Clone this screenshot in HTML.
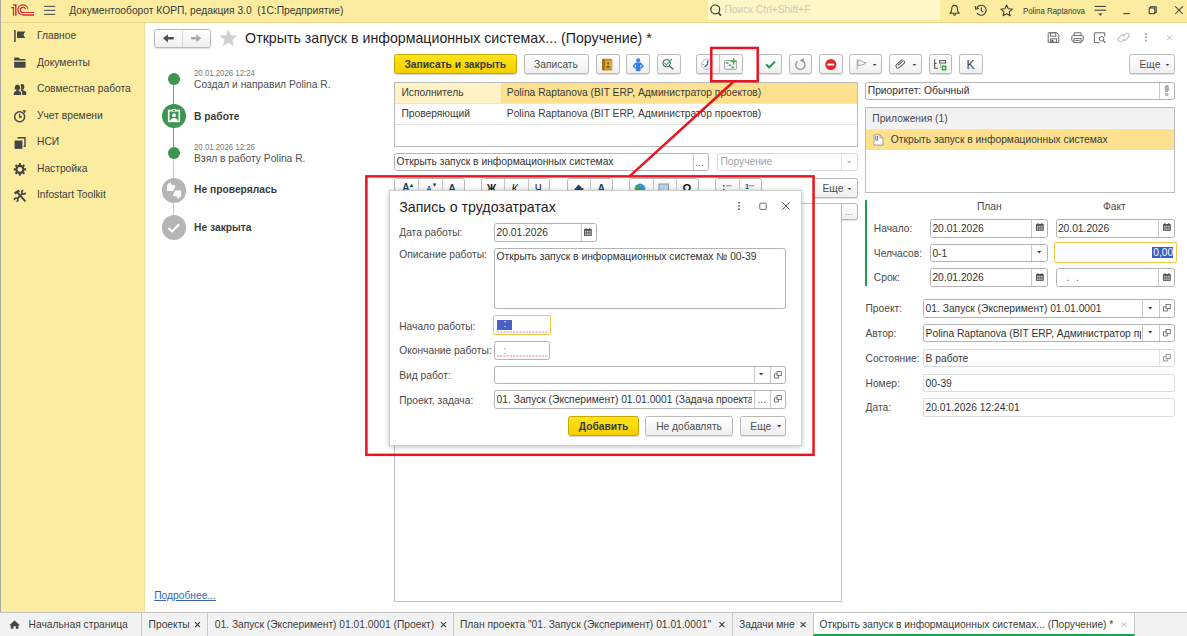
<!DOCTYPE html>
<html lang="ru">
<head>
<meta charset="utf-8">
<title>Документооборот КОРП</title>
<style>
*{box-sizing:border-box;margin:0;padding:0}
html,body{width:1187px;height:636px;overflow:hidden;background:#fff}
body{position:relative;font-family:"Liberation Sans",sans-serif;font-size:10.25px;color:#3a3a3a}
.a{position:absolute;white-space:nowrap}
.t{position:absolute;white-space:nowrap;line-height:12px}
#hdr{left:0;top:0;width:1187px;height:23px;background:#fbec9f;border-bottom:1px solid #e6d78c}
#side{left:0;top:23px;width:144.6px;height:589px;background:#fbec9f;border-right:1px solid #eedf98}
#lb{left:0;top:0;width:1px;height:636px;background:#a9a9a9}
.nav{left:37px;color:#404040;font-size:10.25px}
.btn{position:absolute;border:1px solid #b9b9b9;border-radius:2.5px;background:linear-gradient(#ffffff,#efefef);box-shadow:0 1px 0 rgba(0,0,0,.12);height:20px;top:54px}
.ybtn{position:absolute;border:1px solid #c7a600;border-radius:2.5px;background:linear-gradient(#ffe41a,#f3cf00);box-shadow:0 1px 0 rgba(0,0,0,.15);height:20px;font-weight:700;color:#3a3a3a;text-align:center}
.f{position:absolute;border:1px solid #b4b4b4;border-radius:2.5px;background:#fff;height:18.6px;white-space:nowrap;overflow:hidden;line-height:17.8px;padding-left:1.4px;color:#333}
.f.ro{border-color:#dadada}
.dv{position:absolute;top:0;width:1px;height:100%;background:#c9c9c9}
.lbl{position:absolute;white-space:nowrap;line-height:12px;color:#4a4a4a}
svg{position:absolute;overflow:visible}
</style>
</head>
<body>
<!-- HEADER -->
<div class="a" id="hdr"></div>
<div class="a" id="side"></div>
<div class="a" id="lb"></div>
<div class="t" style="left:69.3px;top:4.5px;color:#3a3a3a">Документооборот КОРП, редакция 3.0&nbsp; (1С:Предприятие)</div>
<div class="a" style="left:708px;top:0;width:232px;height:20px;background:#fdf6c6;border-radius:0 0 2px 2px"></div>
<div class="t" style="left:724.5px;top:4px;color:#cfcbb4">Поиск Ctrl+Shift+F</div>
<div class="t" style="left:1022.7px;top:4.6px;font-size:8.8px;color:#3a3a3a;transform:scaleX(.892);transform-origin:0 0">Polina Raptanova</div>

<!-- SIDEBAR -->
<div class="t nav" style="top:29.5px">Главное</div>
<div class="t nav" style="top:56.5px">Документы</div>
<div class="t nav" style="top:83.3px">Совместная работа</div>
<div class="t nav" style="top:109.6px">Учет времени</div>
<div class="t nav" style="top:136.3px">НСИ</div>
<div class="t nav" style="top:162.7px">Настройка</div>
<div class="t nav" style="top:189.4px">Infostart Toolkit</div>

<!-- ===== SIDEBAR ICONS ===== -->
<svg style="left:0;top:0" width="60" height="210" fill="#454545">
 <!-- flag -->
 <rect x="14.2" y="30" width="1.5" height="12"/>
 <path d="M17 31.4 H25.2 L23.4 34.7 L25.2 38 H17 Z"/>
 <!-- folder -->
 <path d="M14.2 58.3 q0-0.9 0.9-0.9 h3.6 l1.4 1.6 h4.6 q0.9 0 0.9 0.9 v0.6 h-11.4 Z"/>
 <path d="M14.2 61.7 h11.4 v5.2 q0 0.9-0.9 0.9 h-9.6 q-0.9 0-0.9-0.9 Z"/>
 <!-- people -->
 <path d="M17.4 84.4 q2.4 0 2.6 2.6 l0.3 2.6 h-1.6 v1.3 q2.6 0.3 2.5 2.3 v1.8 h-7.4 v-1.8 q0-2 2.5-2.3 v-1.3 h-1.7 l0.3-2.6 q0.2-2.6 2.5-2.6 Z"/>
 <path d="M20.4 84.5 q0.9-0.7 2-0.6 q2 0.2 2 2.8 q0 1.8-1.2 2.8 v1 q3 0.4 3 2.6 v1.9 h-4 v-1.8 q0-1.9-1.6-2.6 q0.8-0.5 0.7-1.3 l-0.3-2.6 q-0.1-1.3-0.6-2.2 Z"/>
 <!-- clock -->
 <circle cx="19.6" cy="116.8" r="5" fill="none" stroke="#454545" stroke-width="1.5"/>
 <path d="M19.6 114 v3 h2.4" fill="none" stroke="#454545" stroke-width="1.3"/>
 <path d="M22.5 110 l3.6 0.4 l-1.6 3.2 Z"/>
 <!-- copy -->
 <rect x="14.6" y="140.5" width="7.8" height="8.4"/>
 <path d="M17.4 137.8 h7.6 v8.4 h-1.4" fill="none" stroke="#454545" stroke-width="1.4"/>
 <!-- gear -->
 <g transform="translate(19.9 169.4)">
  <circle r="3.5" fill="none" stroke="#454545" stroke-width="2.2"/>
  <g stroke="#454545" stroke-width="2.2">
   <line x1="0" y1="-4" x2="0" y2="-6.2"/><line x1="0" y1="4" x2="0" y2="6.2"/>
   <line x1="-4" y1="0" x2="-6.2" y2="0"/><line x1="4" y1="0" x2="6.2" y2="0"/>
   <line x1="2.83" y1="2.83" x2="4.4" y2="4.4"/><line x1="-2.83" y1="2.83" x2="-4.4" y2="4.4"/>
   <line x1="2.83" y1="-2.83" x2="4.4" y2="-4.4"/><line x1="-2.83" y1="-2.83" x2="-4.4" y2="-4.4"/>
  </g>
 </g>
 <!-- tools -->
 <g stroke="#454545" fill="none">
  <line x1="17.8" y1="192.8" x2="24.9" y2="200.9" stroke-width="1.9" stroke-linecap="round"/>
  <line x1="14.7" y1="193.5" x2="19.3" y2="190.5" stroke-width="2.6"/>
  <line x1="22.2" y1="193.6" x2="17.4" y2="198.4" stroke-width="1.8"/>
  <path d="M23.27 190.33 A1.9 1.9 0 1 0 25.47 192.53" stroke-width="1.7"/>
  <path d="M16.51 201.57 A1.8 1.8 0 1 0 14.43 200.11" stroke-width="1.6"/>
 </g>
</svg>
<!-- ===== HEADER ICONS ===== -->
<svg style="left:0;top:0" width="1187" height="23">
 <!-- 1C logo -->
 <g fill="none" stroke="#dc2630">
  <path d="M11.2 7.6 H13.5 V15.7" stroke-width="1.2"/>
  <path d="M13.2 5 H15.8 V15.7" stroke-width="1.4"/>
  <path d="M27.8 8.6 A5 5 0 1 0 23 14.9 H34" stroke-width="1.3"/>
  <path d="M25.5 9.2 A2.6 2.6 0 1 0 23 12.5 H34" stroke-width="1.1"/>
 </g>
 <rect x="23" y="14.3" width="11" height="1.6" fill="#e4553f"/>
 <!-- hamburger -->
 <g stroke="#555" stroke-width="1.1">
  <line x1="44.1" y1="6.4" x2="55.2" y2="6.4"/><line x1="44.1" y1="10.4" x2="55.2" y2="10.4"/><line x1="44.1" y1="14.4" x2="55.2" y2="14.4"/>
 </g>
 <!-- search icon -->
 <circle cx="715.3" cy="9.4" r="4.4" fill="none" stroke="#3a3a3a" stroke-width="1.2"/>
 <line x1="718.3" y1="12.8" x2="721" y2="15.6" stroke="#3a3a3a" stroke-width="1.6"/>
 <!-- bell -->
 <path d="M950 13.2 q1.8-1.2 1.8-4.4 q0-3.4 2.8-3.4 q2.8 0 2.8 3.4 q0 3.2 1.8 4.4 Z" fill="none" stroke="#3a3a3a" stroke-width="1.05" stroke-linejoin="round"/>
 <path d="M953.3 14.3 q1.3 1.6 2.6 0" fill="none" stroke="#3a3a3a" stroke-width="1.05"/>
 <!-- history -->
 <path d="M976.6 8.2 A5 5 0 1 1 977 13" fill="none" stroke="#3a3a3a" stroke-width="1.05"/>
 <path d="M975.2 6 l0.6 3.4 l3.2-1.2" fill="none" stroke="#3a3a3a" stroke-width="1.05"/>
 <path d="M981.3 7.3 v3.2 l2 1.6" fill="none" stroke="#3a3a3a" stroke-width="1.05"/>
 <!-- star -->
 <path d="M1006.6 5 l1.65 3.7 l4 0.4 l-3 2.7 l0.9 4 l-3.55-2.1 l-3.55 2.1 l0.9-4 l-3-2.7 l4-0.4 Z" fill="none" stroke="#3a3a3a" stroke-width="1.05" stroke-linejoin="round"/>
 <!-- menu lines -->
 <g stroke="#3a3a3a" stroke-width="1.05"><line x1="1094.5" y1="6.4" x2="1106" y2="6.4"/><line x1="1094.5" y1="10.2" x2="1106" y2="10.2"/></g>
 <path d="M1098.2 13.4 h4.2 l-2.1 2.4 Z" fill="#3a3a3a"/>
 <!-- window controls -->
 <line x1="1123.4" y1="13.6" x2="1129.8" y2="13.6" stroke="#3a3a3a" stroke-width="1.05"/>
 <rect x="1149.2" y="8" width="5.6" height="5.6" fill="none" stroke="#3a3a3a" stroke-width="1.05"/>
 <path d="M1150.6 8 v-1.2 h5.6 v5.6 h-1.4" fill="none" stroke="#3a3a3a" stroke-width="1.05"/>
 <path d="M1175.2 6.4 l7.6 7.6 M1182.8 6.4 l-7.6 7.6" stroke="#3a3a3a" stroke-width="1.05"/>
</svg>
<!-- ===== MAIN ===== -->
<!-- nav back/forward -->
<div class="btn" style="left:154px;top:28.6px;width:56.6px;height:19.2px"><div class="dv" style="left:26.8px;background:#d6d6d6"></div></div>
<svg style="left:159px;top:33px" width="48" height="10" viewBox="0 0 48 10">
 <path d="M4 5.3 L8.9 1.2 V4.1 H14.7 V6.5 H8.9 V9.4 Z" fill="#4f4f4f"/>
 <path d="M42.2 5.3 L37.3 1.2 V4.1 H32 V6.5 H37.3 V9.4 Z" fill="#acacac"/>
</svg>
<svg style="left:218.8px;top:29.3px" width="18.8" height="17.6" viewBox="0 0 18 17"><path d="M9 0.3 L11.3 6.1 L17.6 6.5 L12.8 10.5 L14.3 16.6 L9 13.3 L3.7 16.6 L5.2 10.5 L0.4 6.5 L6.7 6.1 Z" fill="#cfcfcf"/></svg>
<div class="t" style="left:245.1px;top:30.2px;font-size:14.2px;line-height:16px;color:#1f1f1f">Открыть запуск в информационных системах... (Поручение) *</div>

<!-- timeline -->
<div class="a" style="left:173.2px;top:79px;width:1.3px;height:74px;background:#62ab70"></div>
<div class="a" style="left:173.2px;top:153px;width:1.2px;height:74px;background:#c6c6c6"></div>
<div class="a" style="left:167.8px;top:72.5px;width:12.4px;height:12.4px;border-radius:50%;background:#3d9550"></div>
<div class="a" style="left:161.8px;top:103.5px;width:24.4px;height:24.4px;border-radius:50%;background:#3d9550"></div>
<div class="a" style="left:167.8px;top:146.5px;width:12.4px;height:12.4px;border-radius:50%;background:#3d9550"></div>
<div class="a" style="left:161.8px;top:178.2px;width:24.4px;height:24.6px;border-radius:50%;background:#b5b5b5"></div>
<div class="a" style="left:161.8px;top:215.2px;width:24.4px;height:24.6px;border-radius:50%;background:#b5b5b5"></div>
<div class="t" style="left:194.1px;top:67.6px;font-size:8.8px;line-height:10px;color:#787878;transform:scaleX(.89);transform-origin:0 0">20.01.2026 12:24</div>
<div class="t" style="left:194.1px;top:79px;color:#4f4f4f">Создал и направил Polina R.</div>
<div class="t" style="left:194.1px;top:110.5px;font-weight:700;color:#3c3c3c">В работе</div>
<div class="t" style="left:194.1px;top:141.6px;font-size:8.8px;line-height:10px;color:#787878;transform:scaleX(.89);transform-origin:0 0">20.01.2026 12:26</div>
<div class="t" style="left:194.1px;top:153px;color:#4f4f4f">Взял в работу Polina R.</div>
<div class="t" style="left:194.1px;top:184.4px;font-weight:700;color:#3c3c3c">Не проверялась</div>
<div class="t" style="left:194.1px;top:221.7px;font-weight:700;color:#3c3c3c">Не закрыта</div>
<div class="t" style="left:154.2px;top:589.7px;color:#3363bd;text-decoration:underline">Подробнее...</div>

<!-- toolbar -->
<div class="ybtn" style="left:394px;top:54px;width:122.5px;line-height:20px">Записать и закрыть</div>
<div class="btn" style="left:523.5px;width:65px;text-align:center;line-height:20px;color:#505050">Записать</div>
<div class="btn" style="left:596px;width:23.5px"></div>
<div class="btn" style="left:626.3px;width:23.5px"></div>
<div class="btn" style="left:656.5px;width:24px"></div>
<div class="btn" style="left:696px;width:47px"><div class="dv" style="left:21.6px"></div></div>
<div class="btn" style="left:758px;width:24px"></div>
<div class="btn" style="left:788.5px;width:23.5px"></div>
<div class="btn" style="left:819px;width:23.5px"></div>
<div class="btn" style="left:849px;width:33px"></div>
<div class="btn" style="left:889px;width:32.5px"></div>
<div class="btn" style="left:928.5px;width:23.5px"></div>
<div class="btn" style="left:959.3px;width:23.5px"></div>
<div class="btn" style="left:1129px;width:46px;line-height:20px;padding-left:9.5px;color:#505050">Еще</div>

<!-- table -->
<div class="a" style="left:394px;top:82px;width:464px;height:64.5px;border:1px solid #bcbcbc;background:#fff"></div>
<div class="a" style="left:395px;top:83px;width:106px;height:19.5px;background:#fff2c5"></div>
<div class="a" style="left:501px;top:83px;width:356px;height:19.5px;background:#fde18f"></div>
<div class="a" style="left:395px;top:102.5px;width:462px;height:1px;background:#e6e6e6"></div>
<div class="a" style="left:395px;top:123.8px;width:462px;height:1px;background:#e0e0e0"></div>
<div class="t" style="left:401.4px;top:87px">Исполнитель</div>
<div class="t" style="left:506.8px;top:87px">Polina Raptanova (BIT ERP, Администратор проектов)</div>
<div class="t" style="left:401.4px;top:108.2px">Проверяющий</div>
<div class="t" style="left:506.8px;top:108.2px">Polina Raptanova (BIT ERP, Администратор проектов)</div>

<!-- name row -->
<div class="f" style="left:394px;top:153px;width:314.5px;height:18px;padding-left:1.6px;line-height:16.4px">Открыть запуск в информационных системах<div class="dv" style="left:297.6px"></div><span class="a" style="left:300.2px;top:0.6px;color:#555">...</span></div>
<div class="f ro" style="left:717px;top:153px;width:140.5px;height:18px;line-height:16.4px;color:#a2a2a2;padding-left:2.4px">Поручение<div class="dv" style="left:123px;background:#e2e2e2"></div></div>

<!-- format toolbar -->
<div class="btn" style="left:394px;top:178px;width:70.6px"><div class="dv" style="left:22.8px"></div><div class="dv" style="left:46.6px"></div></div>
<div class="btn" style="left:480.6px;top:178px;width:69.6px"><div class="dv" style="left:22.5px"></div><div class="dv" style="left:46px"></div></div>
<div class="btn" style="left:566.5px;top:178px;width:46.5px"><div class="dv" style="left:22.5px"></div></div>
<div class="btn" style="left:629.3px;top:178px;width:69.5px"><div class="dv" style="left:22.5px"></div><div class="dv" style="left:46px"></div></div>
<div class="btn" style="left:715.2px;top:178px;width:46.5px"><div class="dv" style="left:22.5px"></div></div>
<div class="btn" style="left:812.5px;top:178px;width:45px;line-height:20px;padding-left:9px;color:#505050">Еще</div>
<!-- text area -->
<div class="a" style="left:394px;top:203px;width:447.5px;height:399px;border:1px solid #c2c2c2;background:#fff"></div>
<div class="btn" style="left:840.5px;top:203px;width:17px;height:16.5px;border-radius:0 3px 3px 0"></div>
<div class="t" style="left:845px;top:206.4px;color:#999;font-size:9px">...</div>
<!-- ===== RIGHT PANEL ===== -->
<div class="f" style="left:865px;top:82px;width:310px;height:18px;line-height:16.6px;padding-left:1.8px">Приоритет: Обычный<div class="dv" style="left:292.5px"></div></div>
<div class="a" style="left:865px;top:107px;width:310px;height:86.4px;border:1px solid #bcbcbc;background:#fff"></div>
<div class="a" style="left:866px;top:108px;width:308px;height:21.6px;background:#f2f2f2;border-bottom:1px solid #e4e4e4"></div>
<div class="a" style="left:866px;top:129.6px;width:308px;height:20.2px;background:#fde18f"></div>
<div class="t" style="left:872.3px;top:112.5px;color:#4a4a4a">Приложения (1)</div>
<div class="t" style="left:890.8px;top:134.1px">Открыть запуск в информационных системах</div>

<div class="a" style="left:865.2px;top:200.4px;width:2px;height:85.6px;background:#1a9f4b"></div>
<div class="t" style="left:977px;top:201.2px;color:#4a4a4a">План</div>
<div class="t" style="left:1103px;top:201.2px;color:#4a4a4a">Факт</div>
<div class="lbl" style="left:873.8px;top:223.0px">Начало:</div>
<div class="lbl" style="left:873.8px;top:247.5px">Челчасов:</div>
<div class="lbl" style="left:873.8px;top:272.2px">Срок:</div>
<div class="f" style="left:930px;top:219px;width:117.8px">20.01.2026<div class="dv" style="left:99.6px"></div></div>
<div class="f" style="left:1055.5px;top:219px;width:119.5px">20.01.2026<div class="dv" style="left:101.2px"></div></div>
<div class="f" style="left:930px;top:243.5px;width:117.8px">0-1<div class="dv" style="left:99.6px"></div></div>
<div class="a" style="left:1054px;top:242px;width:123px;height:21.3px;border:1.6px solid #f6c945;border-radius:2px;background:#fff"></div>
<div class="a" style="left:1152.4px;top:247px;width:20.8px;height:11.4px;background:#3a5cc4"></div>
<div class="t" style="left:1153.2px;top:246.6px;color:#fff">0,00</div>
<div class="f" style="left:930px;top:268.2px;width:117.8px">20.01.2026<div class="dv" style="left:99.6px"></div></div>
<div class="f" style="left:1055.5px;top:268.2px;width:119.5px"><span style="letter-spacing:6.6px;color:#555;padding-left:8.6px">..</span><div class="dv" style="left:101.2px"></div></div>

<div class="lbl" style="left:865.5px;top:303.2px">Проект:</div>
<div class="lbl" style="left:865.5px;top:327.9px">Автор:</div>
<div class="lbl" style="left:865.5px;top:352.7px">Состояние:</div>
<div class="lbl" style="left:865.5px;top:377.5px">Номер:</div>
<div class="lbl" style="left:865.5px;top:402.2px">Дата:</div>
<div class="f" style="left:923px;top:299.2px;width:252px;padding-left:1.6px">01. Запуск (Эксперимент) 01.01.0001<div class="dv" style="left:218.2px"></div><div class="dv" style="left:234.7px"></div></div>
<div class="f" style="left:923px;top:323.8px;width:252px;padding-left:1.6px"><span class="a" style="left:1.6px;top:0;width:215px;overflow:hidden">Polina Raptanova (BIT ERP, Администратор проектов)</span><div class="dv" style="left:218.2px"></div><div class="dv" style="left:234.7px"></div></div>
<div class="f ro" style="left:923px;top:348.7px;width:252px;padding-left:1.6px">В работе<div class="dv" style="left:234.7px;background:#e4e4e4"></div></div>
<div class="f ro" style="left:923px;top:373.7px;width:252px;padding-left:1.6px">00-39</div>
<div class="f ro" style="left:923px;top:398.4px;width:252px;padding-left:1.6px">20.01.2026 12:24:01</div>
<!-- ===== TOOLBAR ICONS ===== -->
<svg style="left:0;top:0" width="1187" height="80">
 <!-- second-row right icons -->
 <g fill="none" stroke="#6a6a6a" stroke-width="1">
  <path d="M1048.2 32.8 h8.6 l2 2 v7.6 h-10.6 Z"/>
  <rect x="1050.4" y="32.8" width="5.4" height="3.4"/>
  <rect x="1050.4" y="38.8" width="6.2" height="3.6"/><rect x="1051.4" y="39.8" width="2" height="2.6" fill="#5a5a5a" stroke="none"/>
  <!-- printer -->
  <rect x="1071.8" y="35.6" width="11.4" height="5.4" rx="1"/>
  <path d="M1074 35.4 v-2.6 h7 v2.6"/>
  <rect x="1074" y="38.6" width="7" height="4" fill="#fff"/>
  <line x1="1075.4" y1="40.6" x2="1079.6" y2="40.6"/>
  <!-- preview -->
  <path d="M1104.8 36.5 v-3.7 h-10.4 v9.8 h5.4"/>
  <circle cx="1101.6" cy="38.8" r="2.3"/>
  <line x1="1103.3" y1="40.6" x2="1105.4" y2="42.8" stroke-width="1.3"/>
 </g>
 <!-- link -->
 <g fill="none" stroke="#c2c2c2" stroke-width="1.1" stroke-linecap="round">
  <path d="M1123 36.2 l2.4-2.4 a2.2 2.2 0 0 1 3.2 3.2 l-2.6 2.6 a2.2 2.2 0 0 1 -3 0.2"/>
  <path d="M1124.4 38.8 l-2.4 2.4 a2.2 2.2 0 0 1 -3.2-3.2 l2.6-2.6 a2.2 2.2 0 0 1 3-0.2"/>
 </g>
 <g fill="#8a8a8a"><circle cx="1146" cy="34" r="0.9"/><circle cx="1146" cy="37.2" r="0.9"/><circle cx="1146" cy="40.4" r="0.9"/></g>
 <path d="M1167.2 35.6 l4.6 4.4 M1171.8 35.6 l-4.6 4.4" stroke="#b9b9b9" stroke-width="1"/>

 <!-- book -->
 <rect x="602.2" y="58.8" width="10" height="11.6" rx="1.2" fill="#c8901e"/>
 <rect x="602.2" y="58.8" width="2.2" height="11.6" rx="1" fill="#9a6a10"/>
 <rect x="611.6" y="59.8" width="1.4" height="10" fill="#d9d3c4"/>
 <rect x="605.4" y="61" width="5.4" height="7.4" fill="#dcae48"/>
 <circle cx="608.1" cy="63.4" r="1.1" fill="#7a520c"/>
 <path d="M606.2 67.4 q0-2 1.9-2 q1.9 0 1.9 2 Z" fill="#7a520c"/>
 <!-- person -->
 <circle cx="638.2" cy="60.3" r="1.95" fill="#2f7fe0"/>
 <path d="M635.6 62.8 H640.8 L643.6 66.2 L641.3 68.5 L640.5 67.5 L640.1 70.9 H636.3 L635.9 67.5 L635.1 68.5 L632.8 66.2 Z" fill="#2f7fe0" stroke="#2f7fe0" stroke-width="0.5" stroke-linejoin="round"/>
 <path d="M634.4 66.3 L636 64.6 V67.4 Z M642 66.3 L640.4 64.6 V67.4 Z" fill="#fbfbfb"/>
 <!-- magnifier check -->
 <circle cx="666.6" cy="63.2" r="3.7" fill="none" stroke="#4a4a4a" stroke-width="1"/>
 <line x1="669.4" y1="66" x2="673.4" y2="69.4" stroke="#4a4a4a" stroke-width="1.2"/>
 <path d="M664.4 62.8 l2 2 l5.6-6" fill="none" stroke="#27ae60" stroke-width="1.1"/>
 <!-- clock -->
 <circle cx="707" cy="64.2" r="5.3" fill="#f6f8fb" stroke="#b4c0d2" stroke-width="1"/>
 <path d="M707.8 60.2 L707.3 64.7 L704.5 67" fill="none" stroke="#2d62a8" stroke-width="1.2"/>
 <circle cx="703.3" cy="64.4" r="0.5" fill="#e04a4a"/><circle cx="707.2" cy="68.2" r="0.5" fill="#e88"/>
 <!-- grid plus -->
 <rect x="724.6" y="60.6" width="11.8" height="8.8" rx="0.8" fill="#f2f4f8" stroke="#8e9bb0" stroke-width="0.9"/>
 <rect x="725.8" y="62.2" width="2.8" height="1.6" rx="0.5" fill="#5cb63c"/><rect x="728.6" y="64.4" width="2.8" height="1.6" rx="0.5" fill="#5cb63c"/><rect x="731.2" y="66.6" width="2.8" height="1.6" rx="0.5" fill="#5cb63c"/>
 <path d="M733.6 58.2 v6.2 M730.5 61.3 h6.2" stroke="#4db52a" stroke-width="1.5"/>
 <!-- check -->
 <path d="M766.2 64.4 l3 3 l5.8-5.8" fill="none" stroke="#0f9a3c" stroke-width="2"/>
 <!-- undo -->
 <path d="M802.4 60.7 A4.6 4.6 0 1 1 797.5 61.2" fill="none" stroke="#9e9292" stroke-width="1.4"/>
 <path d="M803.8 58.2 L803.7 62.6 L799.6 60.2 Z" fill="#9e9292"/>
 <!-- stop -->
 <circle cx="830.8" cy="64.5" r="5.5" fill="#e8232b"/>
 <rect x="827.4" y="63.5" width="6.8" height="2.1" rx="0.4" fill="#fff"/>
 <!-- flag -->
 <line x1="857.2" y1="59.6" x2="857.2" y2="69.6" stroke="#c9a9a6" stroke-width="1.1"/>
 <path d="M857.9 60.2 q2-0.6 3.6 0.8 q2 1.8 4.8 1.6 q-2.6 2.4-5 2.4 q-1.8 0-3.4 0.8 Z" fill="#fbfbfb" stroke="#8c8c8c" stroke-width="0.8" stroke-linejoin="round"/>
 <path d="M872.8 63.9 h3.8 l-1.9 2.1 Z" fill="#444"/>
 <!-- clip -->
 <g transform="translate(900.3 63.9) rotate(-42)" fill="none" stroke="#5a5a5a" stroke-width="0.95" stroke-linecap="round">
  <path d="M4.2 -2.1 H-3 A2.1 2.1 0 0 0 -3 2.1 H3.6 A1.25 1.25 0 0 0 3.6 -0.4 H-2.4"/>
 </g>
 <path d="M912.5 63.9 h3.8 l-1.9 2.1 Z" fill="#444"/>
 <!-- tree -->
 <path d="M934.6 59.2 v9 h3.4 M934.6 63.4 h2" fill="none" stroke="#5a5a5a" stroke-width="1.1"/>
 <rect x="939.6" y="60.6" width="6" height="2.4" fill="none" stroke="#5a5a5a" stroke-width="1"/>
 <path d="M940.4 64.6 v4" stroke="#5a5a5a" stroke-width="0.9" stroke-dasharray="1 1"/>
 <rect x="941.6" y="65.6" width="4.8" height="4.8" rx="1" fill="#1aa53f"/>
 <path d="M944 66.6 v2.8 M942.6 68 h2.8" stroke="#fff" stroke-width="0.9"/>
 <!-- dropdown arrows for Еще -->
 <path d="M1165.6 64 h3.8 l-1.9 2.1 Z" fill="#444"/>
</svg>
<div class="t" style="left:966.4px;top:57.6px;font-size:12.2px;line-height:14px;color:#444">K</div>
<!-- ===== FORMAT TOOLBAR ICONS ===== -->
<div class="t" style="left:402.2px;top:181.6px;font-weight:700;color:#1b4872;font-size:10px">A</div>
<div class="t" style="left:408.6px;top:179.2px;font-weight:700;color:#1b4872;font-size:6px">▲</div>
<div class="t" style="left:426.2px;top:183.4px;font-weight:700;color:#3a5f9e;font-size:7.5px">A</div>
<div class="t" style="left:431.4px;top:178.6px;font-weight:700;color:#1b4872;font-size:6px">▼</div>
<div class="t" style="left:448.2px;top:181.6px;font-weight:700;color:#1b4872;font-size:10.5px">A</div>
<div class="t" style="left:486.8px;top:181.6px;font-weight:700;color:#222;font-size:10.5px">Ж</div>
<div class="t" style="left:511.6px;top:181.6px;font-style:italic;color:#222;font-size:10.5px">К</div>
<div class="t" style="left:534.8px;top:181.6px;color:#222;font-size:10.5px">Ч</div>
<div class="t" style="left:597.6px;top:181.6px;font-weight:700;color:#1b4872;font-size:10.5px">A</div>
<div class="t" style="left:682.4px;top:182px;font-weight:700;color:#111;font-size:11px">Ω</div>
<svg style="left:0;top:170px" width="1187" height="30">
 <path d="M574 19.8 l4.6-5.4 l4.4 4.6 l-1 1.2 Z" fill="#1b4872"/>
 <circle cx="582.6" cy="19" r="1.1" fill="#d8232a"/>
 <circle cx="640" cy="19" r="5.4" fill="#3f8fe0"/>
 <path d="M636 16 q3-2 4 1 q2 1 1 3 l-3 1 q-3-2-2-5 Z" fill="#3aa657"/>
 <rect x="659" y="14" width="9.4" height="8" fill="#b9d3ee" stroke="#7f8c9a" stroke-width="0.9"/>
 <circle cx="723.8" cy="15.8" r="0.9" fill="#1b4872"/><line x1="726" y1="15.8" x2="731.6" y2="15.8" stroke="#777" stroke-width="0.9"/>
 <circle cx="723.8" cy="19.6" r="0.9" fill="#1b4872"/>
 <line x1="748.6" y1="15.8" x2="754.4" y2="15.8" stroke="#777" stroke-width="0.9"/>
 <path d="M847.6 18 h3.8 l-1.9 2.1 Z" fill="#444"/>
</svg>
<div class="t" style="left:745px;top:180.8px;font-weight:700;color:#1b4872;font-size:7px">1</div>
<!-- ===== SMALL FIELD ICONS ===== -->
<svg style="left:1036.1px;top:223.4px" width="7.8" height="8" viewBox="0 0 7.8 8"><rect x="0" y="0.9" width="7.8" height="7.1" rx="0.7" fill="#565656"/><rect x="1.4" y="0" width="1.3" height="1.8" rx="0.5" fill="#565656"/><rect x="5.1" y="0" width="1.3" height="1.8" rx="0.5" fill="#565656"/><rect x="1.1" y="2.9" width="1.3" height="0.9" fill="#fff"/><rect x="3.2" y="2.9" width="1.3" height="0.9" fill="#fff"/><rect x="5.3" y="2.9" width="1.3" height="0.9" fill="#fff"/><rect x="1.1" y="4.6" width="1.3" height="0.9" fill="#fff"/><rect x="3.2" y="4.6" width="1.3" height="0.9" fill="#fff"/><rect x="5.3" y="4.6" width="1.3" height="0.9" fill="#fff"/><rect x="1.1" y="6.3" width="1.3" height="0.9" fill="#fff"/><rect x="3.2" y="6.3" width="1.3" height="0.9" fill="#fff"/><rect x="5.3" y="6.3" width="1.3" height="0.9" fill="#fff"/></svg>
<svg style="left:1162.5px;top:223.4px" width="7.8" height="8" viewBox="0 0 7.8 8"><rect x="0" y="0.9" width="7.8" height="7.1" rx="0.7" fill="#565656"/><rect x="1.4" y="0" width="1.3" height="1.8" rx="0.5" fill="#565656"/><rect x="5.1" y="0" width="1.3" height="1.8" rx="0.5" fill="#565656"/><rect x="1.1" y="2.9" width="1.3" height="0.9" fill="#fff"/><rect x="3.2" y="2.9" width="1.3" height="0.9" fill="#fff"/><rect x="5.3" y="2.9" width="1.3" height="0.9" fill="#fff"/><rect x="1.1" y="4.6" width="1.3" height="0.9" fill="#fff"/><rect x="3.2" y="4.6" width="1.3" height="0.9" fill="#fff"/><rect x="5.3" y="4.6" width="1.3" height="0.9" fill="#fff"/><rect x="1.1" y="6.3" width="1.3" height="0.9" fill="#fff"/><rect x="3.2" y="6.3" width="1.3" height="0.9" fill="#fff"/><rect x="5.3" y="6.3" width="1.3" height="0.9" fill="#fff"/></svg>
<svg style="left:1036.1px;top:272.5px" width="7.8" height="8" viewBox="0 0 7.8 8"><rect x="0" y="0.9" width="7.8" height="7.1" rx="0.7" fill="#565656"/><rect x="1.4" y="0" width="1.3" height="1.8" rx="0.5" fill="#565656"/><rect x="5.1" y="0" width="1.3" height="1.8" rx="0.5" fill="#565656"/><rect x="1.1" y="2.9" width="1.3" height="0.9" fill="#fff"/><rect x="3.2" y="2.9" width="1.3" height="0.9" fill="#fff"/><rect x="5.3" y="2.9" width="1.3" height="0.9" fill="#fff"/><rect x="1.1" y="4.6" width="1.3" height="0.9" fill="#fff"/><rect x="3.2" y="4.6" width="1.3" height="0.9" fill="#fff"/><rect x="5.3" y="4.6" width="1.3" height="0.9" fill="#fff"/><rect x="1.1" y="6.3" width="1.3" height="0.9" fill="#fff"/><rect x="3.2" y="6.3" width="1.3" height="0.9" fill="#fff"/><rect x="5.3" y="6.3" width="1.3" height="0.9" fill="#fff"/></svg>
<svg style="left:1162.5px;top:272.5px" width="7.8" height="8" viewBox="0 0 7.8 8"><rect x="0" y="0.9" width="7.8" height="7.1" rx="0.7" fill="#565656"/><rect x="1.4" y="0" width="1.3" height="1.8" rx="0.5" fill="#565656"/><rect x="5.1" y="0" width="1.3" height="1.8" rx="0.5" fill="#565656"/><rect x="1.1" y="2.9" width="1.3" height="0.9" fill="#fff"/><rect x="3.2" y="2.9" width="1.3" height="0.9" fill="#fff"/><rect x="5.3" y="2.9" width="1.3" height="0.9" fill="#fff"/><rect x="1.1" y="4.6" width="1.3" height="0.9" fill="#fff"/><rect x="3.2" y="4.6" width="1.3" height="0.9" fill="#fff"/><rect x="5.3" y="4.6" width="1.3" height="0.9" fill="#fff"/><rect x="1.1" y="6.3" width="1.3" height="0.9" fill="#fff"/><rect x="3.2" y="6.3" width="1.3" height="0.9" fill="#fff"/><rect x="5.3" y="6.3" width="1.3" height="0.9" fill="#fff"/></svg>
<svg style="left:1037.2px;top:250.6px" width="4.4" height="2.6" viewBox="0 0 4.4 2.6"><path d="M0 0 H4.4 L2.2 2.6 Z" fill="#444"/></svg>
<svg style="left:1148.3px;top:306.7px" width="4.4" height="2.6" viewBox="0 0 4.4 2.6"><path d="M0 0 H4.4 L2.2 2.6 Z" fill="#444"/></svg>
<svg style="left:1148.3px;top:331.4px" width="4.4" height="2.6" viewBox="0 0 4.4 2.6"><path d="M0 0 H4.4 L2.2 2.6 Z" fill="#444"/></svg>
<svg style="left:847.0px;top:160.9px" width="4.4" height="2.6" viewBox="0 0 4.4 2.6"><path d="M0 0 H4.4 L2.2 2.6 Z" fill="#b5b5b5"/></svg>
<svg style="left:1162.6px;top:304.2px" width="7.8" height="7.4" viewBox="0 0 7.8 7.4" fill="none" stroke="#6a6a6a" stroke-width="0.9"><rect x="3.1" y="0.45" width="4.2" height="4.2"/><path d="M3.1 2.7 H0.45 V6.95 H4.7 V4.65"/></svg>
<svg style="left:1162.6px;top:329.0px" width="7.8" height="7.4" viewBox="0 0 7.8 7.4" fill="none" stroke="#6a6a6a" stroke-width="0.9"><rect x="3.1" y="0.45" width="4.2" height="4.2"/><path d="M3.1 2.7 H0.45 V6.95 H4.7 V4.65"/></svg>
<svg style="left:1162.6px;top:353.9px" width="7.8" height="7.4" viewBox="0 0 7.8 7.4" fill="none" stroke="#8a8a8a" stroke-width="0.9"><rect x="3.1" y="0.45" width="4.2" height="4.2"/><path d="M3.1 2.7 H0.45 V6.95 H4.7 V4.65"/></svg>
<!-- ===== TIMELINE / MISC ICONS ===== -->
<svg style="left:0;top:0" width="1187" height="250">
 <!-- badge in green circle -->
 <rect x="168.7" y="110.6" width="10.6" height="10.8" fill="none" stroke="#fff" stroke-width="1.6"/>
 <rect x="172" y="109" width="4.2" height="2.4" fill="#fff"/>
 <rect x="172.9" y="110" width="2.4" height="0.9" fill="#3d9550"/>
 <circle cx="174" cy="115.2" r="1.9" fill="#fff"/>
 <path d="M170.4 121 q0.4-3 3.6-3 q3.2 0 3.6 3 Z" fill="#fff"/>
 <!-- arrows in gray circle -->
 <path d="M167.1 185 L170.3 182.1 L171.2 184.8 L175.1 185.2 V187.1 L173.1 190.9 H167.1 Z" fill="#fff"/>
 <path d="M181.1 196.3 L177.9 199.2 L177 196.5 L173.1 196.1 V194.2 L175.1 190.4 H181.1 Z" fill="#fff"/>
 <!-- check in gray circle -->
 <path d="M168.4 228 l3.6 3.6 l7.2-7.4" fill="none" stroke="#fff" stroke-width="2.1"/>
 <!-- attachment file icon -->
 <path d="M874 134.8 h6 l3 3 v7.3 h-9 Z" fill="#fff" stroke="#8a8a8a" stroke-width="0.8"/>
 <path d="M880 134.8 v3 h3" fill="none" stroke="#8a8a8a" stroke-width="0.8"/>
 <path d="M875.8 136.2 v3.4 q0 0.9 0.9 0.9 q0.9 0 0.9-0.9 v-3.6" fill="none" stroke="#444" stroke-width="0.8"/>
 <!-- priority ! -->
 <rect x="1165.3" y="85.5" width="3" height="6.2" rx="1.3" fill="#b5b5b5" stroke="#8a8a8a" stroke-width="0.7"/>
 <circle cx="1166.8" cy="94.5" r="1.3" fill="#c9c9c9" stroke="#8a8a8a" stroke-width="0.7"/>
</svg>
<!-- ===== TABS ===== -->
<div class="a" style="left:0;top:612px;width:1187px;height:24px;background:#f2f2f2;border-top:1px solid #c3c3c3"></div>
<div class="a" style="left:140.5px;top:613px;width:1px;height:23px;background:#cacaca"></div>
<div class="a" style="left:206.5px;top:613px;width:1px;height:23px;background:#c9c9c9"></div>
<div class="a" style="left:452.5px;top:613px;width:1px;height:23px;background:#c9c9c9"></div>
<div class="a" style="left:731.5px;top:613px;width:1px;height:23px;background:#c9c9c9"></div>
<div class="a" style="left:812.5px;top:613px;width:322.5px;height:23px;background:#fff;border-left:1px solid #c9c9c9;border-right:1px solid #c9c9c9;border-bottom:2px solid #21a04a"></div>
<div class="t" style="left:28.6px;top:619.4px;color:#3c3c3c">Начальная страница</div>
<div class="t" style="left:148.6px;top:619.4px;color:#3c3c3c">Проекты</div>
<div class="t" style="left:214.8px;top:619.4px;color:#3c3c3c">01. Запуск (Эксперимент) 01.01.0001 (Проект)</div>
<div class="t" style="left:460px;top:619.4px;color:#3c3c3c">План проекта "01. Запуск (Эксперимент) 01.01.0001"</div>
<div class="t" style="left:739px;top:619.4px;color:#3c3c3c">Задачи мне</div>
<div class="t" style="left:819.5px;top:619.4px;color:#3c3c3c">Открыть запуск в информационных системах... (Поручение) *</div>
<svg style="left:0;top:612px" width="1187" height="24">
 <path d="M14.6 8.6 l-5.4 4.6 h1.6 v3.6 h2.6 v-2.6 h2.4 v2.6 h2.6 v-3.6 h1.6 Z" fill="#454545"/>
 <g stroke="#3a3a3a" stroke-width="1.1">
  <path d="M195 10.2 l5 5 M200 10.2 l-5 5"/>
  <path d="M441 10.2 l5 5 M446 10.2 l-5 5"/>
  <path d="M719.4 10.2 l5 5 M724.4 10.2 l-5 5"/>
  <path d="M800.6 10.2 l5 5 M805.6 10.2 l-5 5"/>
 </g>
 <path d="M1121.6 10.4 l4.6 4.6 M1126.2 10.4 l-4.6 4.6" stroke="#b5b5b5" stroke-width="1"/>
</svg>
<!-- ===== RED ANNOTATIONS (under dialog) ===== -->
<svg style="left:0;top:0" width="1187" height="636" fill="none" stroke="#e9141f" stroke-width="2.5">
 <rect x="711.3" y="47.95" width="46.4" height="33.3"/>
 <line x1="733.2" y1="82" x2="629.2" y2="176.6"/>
 <rect x="366.35" y="176.35" width="447.2" height="278.5"/>
</svg>
<!-- ===== DIALOG ===== -->
<div class="a" style="left:389.3px;top:190px;width:412.7px;height:255.8px;background:#fff;border:1px solid #cfcfcf;box-shadow:0 1px 5px rgba(0,0,0,.25)"></div>
<div class="t" style="left:399.2px;top:198.8px;font-size:14.2px;line-height:16px;color:#1f1f1f">Запись о трудозатратах</div>
<div class="lbl" style="left:399.2px;top:227.1px">Дата работы:</div>
<div class="lbl" style="left:399.2px;top:249.0px">Описание работы:</div>
<div class="lbl" style="left:399.2px;top:320.5px">Начало работы:</div>
<div class="lbl" style="left:399.2px;top:345.2px">Окончание работы:</div>
<div class="lbl" style="left:399.2px;top:369.8px">Вид работ:</div>
<div class="lbl" style="left:399.2px;top:394.5px">Проект, задача:</div>
<div class="f" style="left:494px;top:223.3px;width:102.5px;padding-left:1.6px">20.01.2026<div class="dv" style="left:85.5px"></div></div>
<div class="f" style="left:494px;top:248.2px;width:292px;height:61px;padding-left:1.6px;line-height:15px">Открыть запуск в информационных системах № 00-39</div>
<div class="a" style="left:492.6px;top:314.6px;width:58.6px;height:20.8px;border:1.4px solid #f6c945;border-radius:2px;background:#fff"></div>
<div class="a" style="left:497px;top:319.5px;width:15.2px;height:10.8px;background:#4a60c4"></div>
<div class="t" style="left:503.6px;top:318px;color:#fff">:</div>
<svg style="left:497px;top:330.8px" width="51" height="2"><line x1="0" y1="1" x2="50.5" y2="1" stroke="#ee6a7c" stroke-width="0.8" stroke-dasharray="2.2 1"/></svg>
<div class="f" style="left:494px;top:341px;width:55.5px"></div>
<div class="t" style="left:503.2px;top:345px;color:#9a8a7a">:</div>
<svg style="left:497px;top:355.2px" width="51" height="2"><line x1="0" y1="1" x2="50.5" y2="1" stroke="#ee6a7c" stroke-width="0.8" stroke-dasharray="2.2 1"/></svg>
<div class="f" style="left:494px;top:365.6px;width:292px"><div class="dv" style="left:258.5px"></div><div class="dv" style="left:274.5px"></div></div>
<div class="f" style="left:494px;top:390.4px;width:292px;padding-left:1.6px"><span class="a" style="left:1.6px;top:0;width:255px;overflow:hidden">01. Запуск (Эксперимент) 01.01.0001 (Задача проекта)</span><div class="dv" style="left:258.5px"></div><div class="dv" style="left:274.5px"></div><span class="a" style="left:262.5px;top:0;color:#555">...</span></div>
<div class="ybtn" style="left:568.3px;top:415.5px;width:70.5px;line-height:20px">Добавить</div>
<div class="btn" style="left:645.3px;top:415.5px;width:87.5px;text-align:center;line-height:20px;color:#505050">Не добавлять</div>
<div class="btn" style="left:739.8px;top:415.5px;width:46.2px;line-height:20px;padding-left:9.5px;color:#505050">Еще</div>
<!-- ===== DIALOG SMALL ICONS ===== -->
<svg style="left:584.3px;top:227.5px" width="7.8" height="8" viewBox="0 0 7.8 8"><rect x="0" y="0.9" width="7.8" height="7.1" rx="0.7" fill="#565656"/><rect x="1.4" y="0" width="1.3" height="1.8" rx="0.5" fill="#565656"/><rect x="5.1" y="0" width="1.3" height="1.8" rx="0.5" fill="#565656"/><rect x="1.1" y="2.9" width="1.3" height="0.9" fill="#fff"/><rect x="3.2" y="2.9" width="1.3" height="0.9" fill="#fff"/><rect x="5.3" y="2.9" width="1.3" height="0.9" fill="#fff"/><rect x="1.1" y="4.6" width="1.3" height="0.9" fill="#fff"/><rect x="3.2" y="4.6" width="1.3" height="0.9" fill="#fff"/><rect x="5.3" y="4.6" width="1.3" height="0.9" fill="#fff"/><rect x="1.1" y="6.3" width="1.3" height="0.9" fill="#fff"/><rect x="3.2" y="6.3" width="1.3" height="0.9" fill="#fff"/><rect x="5.3" y="6.3" width="1.3" height="0.9" fill="#fff"/></svg>
<svg style="left:759.1px;top:373.0px" width="4.4" height="2.6" viewBox="0 0 4.4 2.6"><path d="M0 0 H4.4 L2.2 2.6 Z" fill="#444"/></svg>
<svg style="left:773.5px;top:370.6px" width="7.8" height="7.4" viewBox="0 0 7.8 7.4" fill="none" stroke="#6a6a6a" stroke-width="0.9"><rect x="3.1" y="0.45" width="4.2" height="4.2"/><path d="M3.1 2.7 H0.45 V6.95 H4.7 V4.65"/></svg>
<svg style="left:773.5px;top:395.3px" width="7.8" height="7.4" viewBox="0 0 7.8 7.4" fill="none" stroke="#6a6a6a" stroke-width="0.9"><rect x="3.1" y="0.45" width="4.2" height="4.2"/><path d="M3.1 2.7 H0.45 V6.95 H4.7 V4.65"/></svg>
<svg style="left:776.5px;top:424.6px" width="4.4" height="2.6" viewBox="0 0 4.4 2.6"><path d="M0 0 H4.4 L2.2 2.6 Z" fill="#444"/></svg>
<!-- dialog header icons -->
<svg style="left:730px;top:198px" width="70" height="16">
 <g fill="#5a5a5a"><rect x="8.2" y="3.9" width="1.6" height="1.6"/><rect x="8.2" y="7.2" width="1.6" height="1.6"/><rect x="8.2" y="10.4" width="1.6" height="1.6"/></g>
 <rect x="29.8" y="5.2" width="6.4" height="6.2" rx="0.8" fill="none" stroke="#5a5a5a" stroke-width="0.9"/>
 <path d="M52.3 4.3 l7.4 7.4 M59.7 4.3 l-7.4 7.4" stroke="#4a4a4a" stroke-width="0.95"/>
</svg>
</body>
</html>
